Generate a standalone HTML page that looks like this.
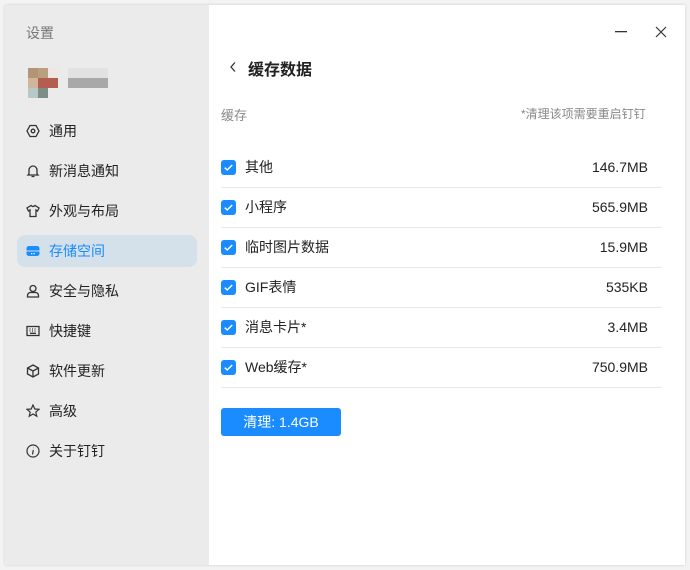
<!DOCTYPE html>
<html><head><meta charset="utf-8"><style>
*{margin:0;padding:0;box-sizing:border-box}
body{width:690px;height:570px;background:#f3f3f3;font-family:"Liberation Sans","Noto Sans CJK SC",sans-serif;position:relative;overflow:hidden}
.win{position:absolute;left:5px;top:5px;width:680px;height:560px;background:#fff;box-shadow:0 0 3px rgba(0,0,0,.15)}
.side{position:absolute;left:5px;top:5px;width:204px;height:560px;background:#ebebeb}
.t{position:absolute;white-space:nowrap}
.nav{position:absolute;left:26px;width:160px;font-size:14px;color:#222;height:20px;line-height:20px;white-space:nowrap}
.nav svg{position:absolute;left:0;top:3px}
.nav span{position:absolute;left:23px;top:0;white-space:nowrap}
.row{position:absolute;left:221px;width:441px;height:40px;border-bottom:1px solid #e8e8e8;font-size:14px;color:#222}
.cb{position:absolute;left:0;top:12px;width:15px;height:15px;background:#1a8cff;border-radius:3px}
.row .l,.row .r{position:absolute;top:9px;line-height:20px;height:20px;white-space:nowrap}
.row .l{left:24px}
.row .r{right:14px}
</style></head><body>
<div class="win"></div>
<div class="side"></div>
<div class="t" style="left:26px;top:23px;font-size:14px;color:#777">设置</div>
<div style="position:absolute;left:28px;top:68px;width:10px;height:10px;background:#b39476"></div>
<div style="position:absolute;left:38px;top:68px;width:10px;height:10px;background:#b8a07f"></div>
<div style="position:absolute;left:48px;top:68px;width:10px;height:10px;background:#f0e6e4"></div>
<div style="position:absolute;left:28px;top:78px;width:10px;height:10px;background:#d2b49a"></div>
<div style="position:absolute;left:38px;top:78px;width:20px;height:10px;background:#b35e50"></div>
<div style="position:absolute;left:28px;top:88px;width:10px;height:10px;background:#b6c8c8"></div>
<div style="position:absolute;left:38px;top:88px;width:10px;height:10px;background:#7e8e84"></div>
<div style="position:absolute;left:68px;top:68px;width:40px;height:10px;background:#e2e2e2"></div>
<div style="position:absolute;left:68px;top:78px;width:40px;height:10px;background:#a8a8a8"></div>
<div style="position:absolute;left:17px;top:235px;width:180px;height:32px;background:#d4e0ea;border-radius:8px"></div>

<div class="nav" style="top:121px"><svg width="14" height="14" viewBox="0 0 14 14" fill="none" stroke="#333" stroke-width="1.3"><path d="M4 1.5h6l3 5.5-3 5.5H4L1 7z"/><circle cx="7" cy="7" r="1.8"/></svg><span>通用</span></div>
<div class="nav" style="top:161px"><svg width="14" height="14" viewBox="0 0 14 14" fill="none" stroke="#333" stroke-width="1.3"><path d="M3 10V6a4 4 0 0 1 8 0v4l1 1H2zM5.5 12.5h3"/></svg><span>新消息通知</span></div>
<div class="nav" style="top:201px"><svg width="14" height="14" viewBox="0 0 14 14" fill="none" stroke="#333" stroke-width="1.3"><path d="M5 1.5L1 4l1.5 3L4 6v6.5h6V6l1.5 1L13 4 9 1.5Q7 3.5 5 1.5z"/></svg><span>外观与布局</span></div>
<div class="nav" style="top:241px;color:#1a8cff"><svg width="14" height="14" viewBox="0 0 14 14"><rect x="0.5" y="2" width="13" height="10" rx="2.5" fill="#1a8cff"/><rect x="0.5" y="6.5" width="13" height="1" fill="#d4e0ea"/><rect x="5" y="9" width="1.3" height="1.3" fill="#fff"/><rect x="7.5" y="9" width="1.3" height="1.3" fill="#fff"/></svg><span>存储空间</span></div>
<div class="nav" style="top:281px"><svg width="14" height="14" viewBox="0 0 14 14" fill="none" stroke="#333" stroke-width="1.3"><circle cx="7" cy="4.5" r="3"/><path d="M1.5 13v-1.5a3 3 0 0 1 3-3h5a3 3 0 0 1 3 3V13z"/></svg><span>安全与隐私</span></div>
<div class="nav" style="top:321px"><svg width="14" height="14" viewBox="0 0 14 14" fill="none" stroke="#333" stroke-width="1.3"><rect x="1" y="2.5" width="12" height="9"/><path d="M3.5 5h1M6 5h1M8.5 5h1M3.5 7h1M6 7h1M8.5 7h1M4 9.3h6"/></svg><span>快捷键</span></div>
<div class="nav" style="top:361px"><svg width="14" height="14" viewBox="0 0 14 14" fill="none" stroke="#333" stroke-width="1.3"><path d="M7 1l5.5 3v6L7 13 1.5 10V4zM1.5 4L7 7l5.5-3M7 7v6"/></svg><span>软件更新</span></div>
<div class="nav" style="top:401px"><svg width="14" height="14" viewBox="0 0 14 14" fill="none" stroke="#333" stroke-width="1.2"><path d="M7 1l1.8 4 4.2.3-3.2 2.8 1 4.2L7 10l-3.8 2.3 1-4.2L1 5.3 5.2 5z"/></svg><span>高级</span></div>
<div class="nav" style="top:441px"><svg width="14" height="14" viewBox="0 0 14 14" fill="none" stroke="#333" stroke-width="1.2"><circle cx="7" cy="7" r="6"/><path d="M7.3 6L6.5 10.5M7.5 3.8v.3"/></svg><span>关于钉钉</span></div>

<svg style="position:absolute;left:615px;top:31px" width="12" height="2"><rect width="12" height="1.3" fill="#333"/></svg>
<svg style="position:absolute;left:655px;top:26px" width="12" height="12" fill="none" stroke="#333" stroke-width="1.2"><path d="M1 1l10 10M11 1L1 11"/></svg>

<svg style="position:absolute;left:229px;top:61px" width="8" height="12" fill="none" stroke="#333" stroke-width="1.3"><path d="M6 1.5L2 6l4 4.5"/></svg>
<div class="t" style="left:248px;top:56px;font-size:16px;font-weight:bold;color:#222">缓存数据</div>
<div class="t" style="left:221px;top:105px;font-size:13px;color:#888">缓存</div>
<div class="t" style="left:521px;top:105px;font-size:12px;color:#888">*清理该项需要重启钉钉</div>

<div class="row" style="top:148px"><div class="cb"><svg width="15" height="15" fill="none" stroke="#fff" stroke-width="1.5"><path d="M3.8 7.6l2.4 2.4 5-5"/></svg></div><span class="l">其他</span><span class="r">146.7MB</span></div>
<div class="row" style="top:188px"><div class="cb"><svg width="15" height="15" fill="none" stroke="#fff" stroke-width="1.5"><path d="M3.8 7.6l2.4 2.4 5-5"/></svg></div><span class="l">小程序</span><span class="r">565.9MB</span></div>
<div class="row" style="top:228px"><div class="cb"><svg width="15" height="15" fill="none" stroke="#fff" stroke-width="1.5"><path d="M3.8 7.6l2.4 2.4 5-5"/></svg></div><span class="l">临时图片数据</span><span class="r">15.9MB</span></div>
<div class="row" style="top:268px"><div class="cb"><svg width="15" height="15" fill="none" stroke="#fff" stroke-width="1.5"><path d="M3.8 7.6l2.4 2.4 5-5"/></svg></div><span class="l">GIF表情</span><span class="r">535KB</span></div>
<div class="row" style="top:308px"><div class="cb"><svg width="15" height="15" fill="none" stroke="#fff" stroke-width="1.5"><path d="M3.8 7.6l2.4 2.4 5-5"/></svg></div><span class="l">消息卡片*</span><span class="r">3.4MB</span></div>
<div class="row" style="top:348px"><div class="cb"><svg width="15" height="15" fill="none" stroke="#fff" stroke-width="1.5"><path d="M3.8 7.6l2.4 2.4 5-5"/></svg></div><span class="l">Web缓存*</span><span class="r">750.9MB</span></div>

<div style="position:absolute;left:221px;top:408px;width:120px;height:28px;background:#1a8cff;border-radius:3px;color:#fff;font-size:14px;line-height:28px;text-align:center">清理: 1.4GB</div>
</body></html>
